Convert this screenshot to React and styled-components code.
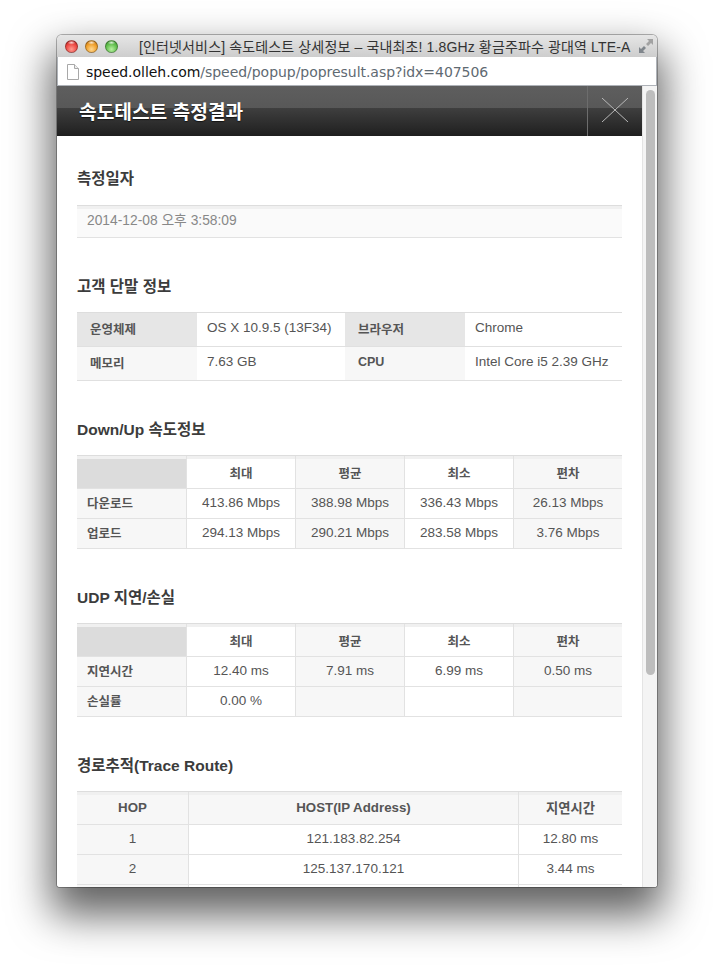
import React from 'react';
import styled, { createGlobalStyle } from 'styled-components';

const FONT = '"Liberation Sans", "Noto Sans CJK KR", sans-serif';

const speedRows = [
  ['다운로드', '413.86 Mbps', '388.98 Mbps', '336.43 Mbps', '26.13 Mbps'],
  ['업로드', '294.13 Mbps', '290.21 Mbps', '283.58 Mbps', '3.76 Mbps'],
];

const udpRows = [
  ['지연시간', '12.40 ms', '7.91 ms', '6.99 ms', '0.50 ms'],
  ['손실률', '0.00 %', '', '', ''],
];

const routeRows = [
  ['1', '121.183.82.254', '12.80 ms'],
  ['2', '125.137.170.121', '3.44 ms'],
  ['', '', ''],
];

const App = () => {
  return (
    <>
      <GlobalStyle />
      <Window>
        <TitleBar>
          <Lights>
            <Light $color="#ee4a44" $glow="#ff9a90" $dark="#a81c1c" />
            <Light $color="#f0a02c" $glow="#ffd890" $dark="#b06a14" />
            <Light $color="#62c04e" $glow="#b8f0a0" $dark="#3a8a2c" />
          </Lights>
          <TitleText>[인터넷서비스] 속도테스트 상세정보 – 국내최초! 1.8GHz 황금주파수 광대역 LTE-A</TitleText>
          <ResizeIcon width="16" height="16" viewBox="0 0 16 16">
            <path d="M9 1h6v6l-2-2-3 3-2-2 3-3z" fill="#a2a2a2" />
            <path d="M7 15H1V9l2 2 3-3 2 2-3 3z" fill="#80868c" />
          </ResizeIcon>
        </TitleBar>
        <AddressBar>
          <DocIcon width="13" height="16" viewBox="0 0 13 16">
            <path d="M1.5.5h7l4 4v11h-11z" fill="#fff" stroke="#a8a8a8" />
            <path d="M8.5.5v4h4" fill="#eee" stroke="#a8a8a8" />
          </DocIcon>
          <Url>
            <strong>speed.olleh.com</strong>/speed/popup/popresult.asp?idx=407506
          </Url>
        </AddressBar>
        <Viewport>
          <Page>
            <Header>
              <HeaderTitle>속도테스트 측정결과</HeaderTitle>
              <CloseButton>
                <svg width="26" height="24" viewBox="0 0 26 24">
                  <path d="M0 0l26 24M26 0L0 24" stroke="#b8b8b8" strokeWidth="1" fill="none" />
                </svg>
              </CloseButton>
            </Header>
            <Content>
              <Section>
                <Heading>측정일자</Heading>
                <DateBox>2014-12-08 오후 3:58:09</DateBox>
              </Section>

              <Section>
                <Heading>고객 단말 정보</Heading>
                <InfoGrid>
                  <InfoLabel $dark>운영체제</InfoLabel>
                  <InfoValue>OS X 10.9.5 (13F34)</InfoValue>
                  <InfoLabel $dark>브라우저</InfoLabel>
                  <InfoValue>Chrome</InfoValue>
                  <InfoLabel>메모리</InfoLabel>
                  <InfoValue>7.63 GB</InfoValue>
                  <InfoLabel>CPU</InfoLabel>
                  <InfoValue>Intel Core i5 2.39 GHz</InfoValue>
                </InfoGrid>
              </Section>

              <Section>
                <Heading>Down/Up 속도정보</Heading>
                <StatTable rows={speedRows} />
              </Section>

              <Section>
                <Heading>UDP 지연/손실</Heading>
                <StatTable rows={udpRows} />
              </Section>

              <Section>
                <Heading>경로추적(Trace Route)</Heading>
                <RouteGrid>
                  <RouteHead>HOP</RouteHead>
                  <RouteHead>HOST(IP Address)</RouteHead>
                  <RouteHead $last>지연시간</RouteHead>
                  {routeRows.map((row) =>
                    row.map((value, i) => (
                      <RouteCell key={row[1] + i} $shade={i === 0} $last={i === 2}>
                        {value}
                      </RouteCell>
                    ))
                  )}
                </RouteGrid>
              </Section>
            </Content>
          </Page>
          <ScrollGutter>
            <ScrollThumb />
          </ScrollGutter>
        </Viewport>
      </Window>
    </>
  );
};

const StatTable = ({ rows }) => (
  <StatGrid>
    <StatCorner />
    {['최대', '평균', '최소', '편차'].map((name, i) => (
      <StatHead key={name} $shade={i % 2 === 1} $last={i === 3}>
        {name}
      </StatHead>
    ))}
    {rows.map((row) => (
      <React.Fragment key={row[0]}>
        <StatLabel>{row[0]}</StatLabel>
        {row.slice(1).map((value, i) => (
          <StatCell key={i} $shade={i % 2 === 1} $last={i === 3}>
            {value}
          </StatCell>
        ))}
      </React.Fragment>
    ))}
  </StatGrid>
);

export default App;

const GlobalStyle = createGlobalStyle`
  html, body {
    margin: 0;
    height: 966px;
    overflow: hidden;
    background: #fff;
  }
  body {
    padding: 35px 0 0 57px;
    box-sizing: border-box;
    font-family: ${FONT};
  }
`;

const Window = styled.div`
  width: 600px;
  height: 852px;
  display: flex;
  flex-direction: column;
  border-radius: 5px 5px 3px 3px;
  overflow: hidden;
  box-shadow: 0 0 0 1px rgba(0, 0, 0, 0.28), 0 22px 42px 6px rgba(0, 0, 0, 0.62);
`;

const TitleBar = styled.div`
  height: 22px;
  flex: none;
  display: flex;
  align-items: center;
  position: relative;
  background: linear-gradient(#e6e6e6, #cdcdcd);
`;

const Lights = styled.div`
  display: flex;
  gap: 7px;
  padding-left: 8px;
`;

const Light = styled.span`
  width: 13px;
  height: 13px;
  border-radius: 50%;
  box-sizing: border-box;
  border: 1px solid rgba(0, 0, 0, 0.3);
  background:
    radial-gradient(ellipse 4px 2px at 50% 15%, rgba(255, 255, 255, 0.8), transparent),
    radial-gradient(circle at 50% 75%, ${(p) => p.$glow} 0, ${(p) => p.$color} 55%, ${(p) => p.$dark} 100%);
`;

const TitleText = styled.div`
  margin-left: 21px;
  margin-top: -1px;
  font-size: 14px;
  letter-spacing: 0.14px;
  color: #333;
  white-space: nowrap;
`;

const ResizeIcon = styled.svg`
  position: absolute;
  right: 3px;
  top: 3px;
`;

const AddressBar = styled.div`
  height: 28px;
  flex: none;
  box-sizing: border-box;
  margin: 0 1px;
  display: flex;
  align-items: center;
  padding: 1px 0 0 8px;
  gap: 7px;
  background: #fff;
  box-shadow: 0 0 0 1px #aeb2b8;
`;

const DocIcon = styled.svg`
  flex: none;
`;

const Url = styled.div`
  font-family: "DejaVu Sans", sans-serif;
  font-size: 14px;
  letter-spacing: -0.04px;
  color: #5f6a72;
  white-space: nowrap;
  strong {
    font-weight: 400;
    color: #111;
  }
`;

const Viewport = styled.div`
  flex: 1;
  min-height: 0;
  margin-top: 1px;
  display: flex;
  background: #fff;
`;

const Page = styled.div`
  width: 585px;
  flex: none;
  overflow: hidden;
`;

const Header = styled.div`
  height: 50px;
  display: flex;
  align-items: center;
  justify-content: space-between;
  background: linear-gradient(#5e5e5e 0, #585858 22px, #3f3f3f 22px, #1f1f1f 100%);
`;

const HeaderTitle = styled.h1`
  margin: 0 0 0 22px;
  font-size: 19.2px;
  font-weight: 700;
  color: #fff;
  text-shadow: 0 1px 1px rgba(0, 0, 0, 0.6);
`;

const CloseButton = styled.div`
  width: 55px;
  height: 50px;
  box-sizing: border-box;
  padding-bottom: 2px;
  border-left: 1px solid #6d6d6d;
  display: flex;
  align-items: center;
  justify-content: center;
`;

const Content = styled.div`
  padding: 32px 20px 0;
`;

const Section = styled.section`
  margin-bottom: 38px;
`;

const Heading = styled.h2`
  margin: 0 0 15px;
  height: 21px;
  line-height: 21px;
  font-size: 15.5px;
  font-weight: 700;
  color: #3c3c3c;
`;

const DateBox = styled.div`
  height: 33px;
  margin-top: 16px;
  box-sizing: border-box;
  padding-left: 10px;
  line-height: 29px;
  font-size: 13.8px;
  color: #888;
  background: #fafafa;
  border-top: 1px solid #ddd;
  border-bottom: 1px solid #e2e2e2;
  box-shadow: inset 0 3px 0 #f0f0f0;
`;

const InfoGrid = styled.div`
  display: grid;
  grid-template-columns: 120px 148px 120px 157px;
  grid-auto-rows: 34px;
  border-top: 1px solid #ddd;
`;

const InfoLabel = styled.div`
  display: flex;
  align-items: center;
  padding: 0 0 3px 13px;
  font-size: 12.5px;
  font-weight: 700;
  color: #555;
  background: ${(p) => (p.$dark ? '#e6e6e6' : '#f7f7f7')};
  border-bottom: 1px solid #e0e0e0;
`;

const InfoValue = styled.div`
  display: flex;
  align-items: center;
  padding: 0 0 5px 10px;
  font-size: 13.5px;
  color: #555;
  background: #fff;
  border-bottom: 1px solid #e0e0e0;
`;

const StatGrid = styled.div`
  display: grid;
  grid-template-columns: 110px repeat(3, 109px) 108px;
  grid-template-rows: 33px 30px 30px;
  border-top: 1px solid #ddd;
`;

const StatCorner = styled.div`
  background: #dcdcdc;
  border-right: 1px solid #e2e2e2;
  border-bottom: 1px solid #e2e2e2;
  box-shadow: inset 0 3px 0 #f0f0f0;
`;

const StatBase = styled.div`
  display: flex;
  align-items: center;
  justify-content: center;
  padding-bottom: 2px;
  color: #555;
  background: ${(p) => (p.$shade ? '#f7f7f7' : '#fff')};
  border-bottom: 1px solid #e2e2e2;
  border-right: ${(p) => (p.$last ? '0' : '1px solid #e2e2e2')};
`;

const StatHead = styled(StatBase)`
  font-size: 12.5px;
  font-weight: 700;
  box-shadow: inset 0 3px 0 #f0f0f0;
  padding-bottom: 0;
`;

const StatCell = styled(StatBase)`
  font-size: 13.5px;
`;

const StatLabel = styled(StatBase)`
  justify-content: flex-start;
  padding-left: 10px;
  font-size: 12.5px;
  font-weight: 700;
  background: #f7f7f7;
  border-right: 1px solid #e2e2e2;
`;

const RouteGrid = styled.div`
  display: grid;
  grid-template-columns: 112px 330px 103px;
  grid-template-rows: 33px 30px 30px 30px;
  border-top: 1px solid #ddd;
`;

const RouteHead = styled(StatBase)`
  font-size: 13.3px;
  font-weight: 700;
  background: #f7f7f7;
  box-shadow: inset 0 3px 0 #f0f0f0;
  padding-bottom: 2px;
`;

const RouteCell = styled(StatBase)`
  font-size: 13.5px;
`;

const ScrollGutter = styled.div`
  flex: 1;
  padding: 4px 2px 0 3px;
  background: #f4f4f4;
  border-left: 1px solid #e4e4e4;
`;

const ScrollThumb = styled.div`
  height: 585px;
  border-radius: 5px;
  background: #bdbdbd;
`;
